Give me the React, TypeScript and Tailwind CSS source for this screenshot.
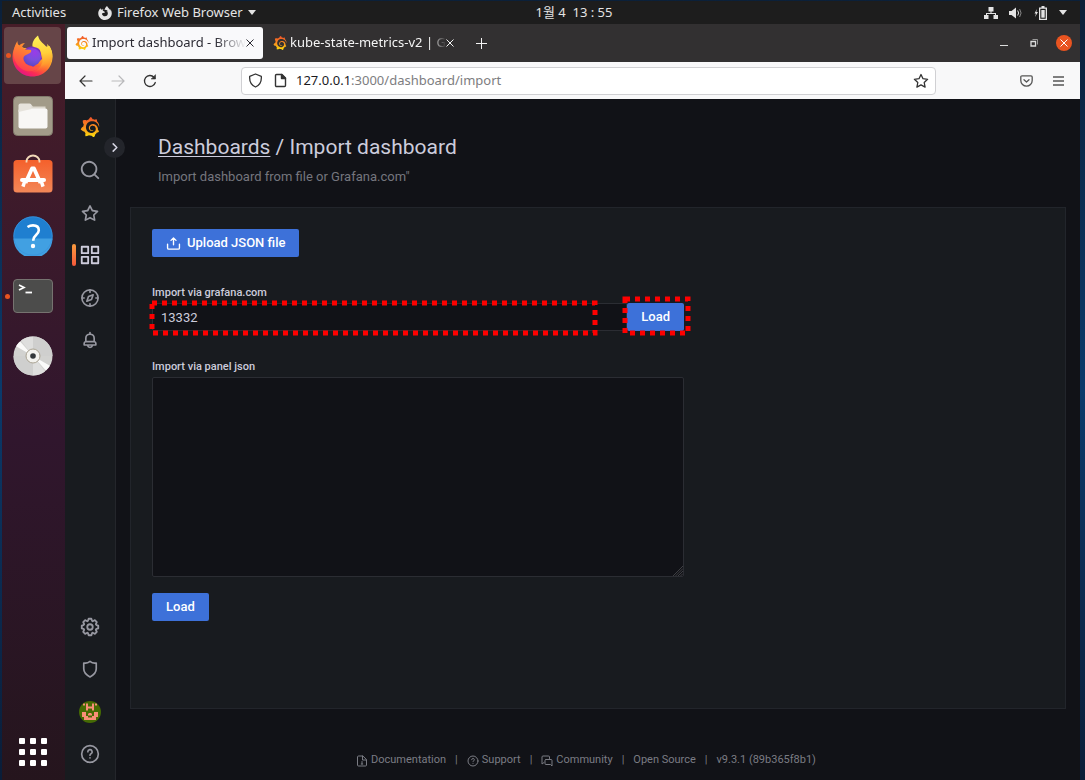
import React from "react";
import { SiFirefoxbrowser, SiGrafana } from "react-icons/si";

type GlyphProps = { d: string; className?: string };

const Glyph = ({ d, className = "size-5" }: GlyphProps) => (
  <svg viewBox="0 0 24 24" fill="currentColor" className={className} aria-hidden="true">
    <path d={d} />
  </svg>
);

const paths = {
  search:
    "M21.71,20.29,18,16.61A9,9,0,1,0,16.61,18l3.68,3.68a1,1,0,0,0,1.42,0A1,1,0,0,0,21.71,20.29ZM11,18a7,7,0,1,1,7-7A7,7,0,0,1,11,18Z",
  star: "M22,9.67A1,1,0,0,0,21.14,9l-5.69-.83L12.9,3a1,1,0,0,0-1.8,0L8.55,8.16,2.86,9a1,1,0,0,0-.81.68,1,1,0,0,0,.25,1l4.13,4-1,5.68A1,1,0,0,0,6.9,21.44L12,18.77l5.1,2.67a.93.93,0,0,0,.46.12,1,1,0,0,0,.59-.19,1,1,0,0,0,.4-1l-1-5.68,4.13-4A1,1,0,0,0,22,9.67Zm-6.15,4a1,1,0,0,0-.29.88l.72,4.2-3.76-2a1.06,1.06,0,0,0-.94,0l-3.76,2,.72-4.2a1,1,0,0,0-.29-.88l-3-3,4.21-.61a1,1,0,0,0,.76-.55L12,5.7l1.88,3.82a1,1,0,0,0,.76.55l4.21.61Z",
  apps: "M10,13H3a1,1,0,0,0-1,1v7a1,1,0,0,0,1,1h7a1,1,0,0,0,1-1V14A1,1,0,0,0,10,13ZM9,20H4V15H9ZM21,2H14a1,1,0,0,0-1,1v7a1,1,0,0,0,1,1h7a1,1,0,0,0,1-1V3A1,1,0,0,0,21,2ZM20,9H15V4h5Zm1,4H14a1,1,0,0,0-1,1v7a1,1,0,0,0,1,1h7a1,1,0,0,0,1-1V14A1,1,0,0,0,21,13Zm-1,7H15V15h5ZM10,2H3A1,1,0,0,0,2,3v7a1,1,0,0,0,1,1h7a1,1,0,0,0,1-1V3A1,1,0,0,0,10,2ZM9,9H4V4H9Z",
  bell: "M18,13.18V10a6,6,0,0,0-5-5.91V3a1,1,0,0,0-2,0V4.09A6,6,0,0,0,6,10v3.18A3,3,0,0,0,4,16v2a1,1,0,0,0,1,1H8.14a4,4,0,0,0,7.72,0H19a1,1,0,0,0,1-1V16A3,3,0,0,0,18,13.18ZM8,10a4,4,0,0,1,8,0v3H8Zm4,10a2,2,0,0,1-1.72-1h3.44A2,2,0,0,1,12,20Zm6-3H6V16a1,1,0,0,1,1-1H17a1,1,0,0,1,1,1Z",
  cog: "M21.32,9.55l-1.89-.63.89-1.78A1,1,0,0,0,20.13,6L18,3.87a1,1,0,0,0-1.15-.19l-1.78.89-.63-1.89A1,1,0,0,0,13.5,2h-3a1,1,0,0,0-.95.68L8.92,4.57,7.14,3.68A1,1,0,0,0,6,3.87L3.87,6a1,1,0,0,0-.19,1.15l.89,1.78-1.89.63A1,1,0,0,0,2,10.5v3a1,1,0,0,0,.68.95l1.89.63-.89,1.78A1,1,0,0,0,3.87,18L6,20.13a1,1,0,0,0,1.15.19l1.78-.89.63,1.89a1,1,0,0,0,.95.68h3a1,1,0,0,0,.95-.68l.63-1.89,1.78.89A1,1,0,0,0,18,20.13L20.13,18a1,1,0,0,0,.19-1.15l-.89-1.78,1.89-.63A1,1,0,0,0,22,13.5v-3A1,1,0,0,0,21.32,9.55ZM20,12.78l-1.2.4A2,2,0,0,0,17.64,16l.57,1.14-1.1,1.1L16,17.64a2,2,0,0,0-2.79,1.16l-.4,1.2H11.22l-.4-1.2A2,2,0,0,0,8,17.64l-1.14.57-1.1-1.1L6.36,16A2,2,0,0,0,5.2,13.18L4,12.78V11.22l1.2-.4A2,2,0,0,0,6.36,8L5.79,6.89l1.1-1.1L8,6.36A2,2,0,0,0,10.82,5.2l.4-1.2h1.56l.4,1.2A2,2,0,0,0,16,6.36l1.14-.57,1.1,1.1L17.64,8a2,2,0,0,0,1.16,2.79l1.2.4ZM12,8a4,4,0,1,0,4,4A4,4,0,0,0,12,8Zm0,6a2,2,0,1,1,2-2A2,2,0,0,1,12,14Z",
};

const line = {
  viewBox: "0 0 24 24",
  fill: "none",
  stroke: "currentColor",
  strokeWidth: 2,
  strokeLinecap: "round",
  strokeLinejoin: "round",
  "aria-hidden": true,
} as const;

const CompassIcon = () => (
  <svg {...line} className="size-5">
    <circle cx="12" cy="12" r="9.7" />
    <path d="M12 2.5v2.5M12 19v2.5M2.5 12H5M19 12h2.5" />
    <path d="M15.8 8.2l-2 5.6-5.6 2 2-5.6z" />
  </svg>
);

const ShieldIcon = () => (
  <svg {...line} className="size-5">
    <path d="M4.5 4.8c2.600.5 5.200-.1 7.500-1.900 2.300 1.800 4.900 2.400 7.500 1.900v7c0 4-2.700 7.300-7.500 9.700-4.800-2.400-7.500-5.700-7.500-9.700z" />
  </svg>
);

const HelpIcon = ({ className = "size-5" }: { className?: string }) => (
  <svg {...line} className={className}>
    <circle cx="12" cy="12" r="10" />
    <path d="M9.400 9.400a2.600 2.600 0 1 1 3.800 2.300c-.8.4-1.200.8-1.200 1.700M12 16.700v.1" />
  </svg>
);

const GrafanaGradient = () => (
  <svg className="absolute size-0" aria-hidden="true">
    <defs>
      <linearGradient id="grafana" x1="0" y1="1" x2="0" y2="0">
        <stop offset="0" stopColor="#fcdf0b" />
        <stop offset="0.4" stopColor="#f99b1c" />
        <stop offset="1" stopColor="#f0502a" />
      </linearGradient>
    </defs>
  </svg>
);

const FirefoxLogo = () => (
  <svg viewBox="0 0 42 42" className="size-[42px]" aria-hidden="true">
    <defs>
      <linearGradient id="ff-body" x1="0.85" y1="0.1" x2="0.25" y2="0.95">
        <stop offset="0" stopColor="#ffe04a" />
        <stop offset="0.3" stopColor="#ffb62b" />
        <stop offset="0.55" stopColor="#ff6a2f" />
        <stop offset="0.8" stopColor="#fb2c54" />
        <stop offset="1" stopColor="#e31587" />
      </linearGradient>
      <linearGradient id="ff-flame" x1="0.4" y1="0" x2="0.5" y2="1">
        <stop offset="0" stopColor="#fff25a" />
        <stop offset="0.5" stopColor="#ffd03a" />
        <stop offset="0.8" stopColor="#ff9a2e" />
        <stop offset="1" stopColor="#ff5a3c" stopOpacity="0" />
      </linearGradient>
      <linearGradient id="ff-face" x1="0.7" y1="0" x2="0.3" y2="1">
        <stop offset="0" stopColor="#ffa52c" />
        <stop offset="0.5" stopColor="#ff7238" />
        <stop offset="1" stopColor="#ff3a50" />
      </linearGradient>
      <radialGradient id="ff-globe" cx="0.65" cy="0.25" r="0.85">
        <stop offset="0" stopColor="#9a3be8" />
        <stop offset="0.5" stopColor="#7a4fdc" />
        <stop offset="1" stopColor="#5646c0" />
      </radialGradient>
    </defs>
    <path
      d="M4.500 9C2 13 .500 17 .500 21.500.500 33 9.500 41.500 20.500 41.500S40.500 33 40.500 21.500C40.500 18 39.500 14 37.500 11L28 13 12 13z"
      fill="url(#ff-body)"
    />
    <path d="M11 17c1-3 5-5.500 9.500-5.500 3 0 5.500.7 7.500 2.500l2 10-9 8-9-8z" fill="#7a2ec4" />
    <circle cx="20" cy="22" r="9" fill="url(#ff-globe)" />
    <path
      d="M26 .500c-4 3-6 7-5.500 11 3 1 7 1 8.500 5.500 4 6 1.500 14-4 17.500-2 1.500-4 2-6 2 9 2 21-3 21.300-15 .1-6-2.300-10-5.300-12.500l1 4.500C32.500 9 27.500 7 26 .500z"
      fill="url(#ff-flame)"
    />
    <path
      d="M5.500 6C3.500 8.500 2 13 1.500 18c0 8 5 16 13 18 6 1 11-1 14-5-6 2-13 1-16.500-4-1.300-2.500-1-5 1-6.500l5-2.500c1.200-.8 1.500-2 1-3l-5.500-.5-3.500-2c.5-2 1.700-3.500 3.200-4.500-2.700 0-4.700 1-6 2.700C6 9.500 5.300 8 5.500 6z"
      fill="url(#ff-face)"
    />
  </svg>
);

const FilesLogo = () => (
  <svg viewBox="0 0 40 40" className="size-10" aria-hidden="true">
    <rect x="0.5" y="0.5" width="39" height="39" rx="4" fill="#a29b89" stroke="#817b6c" />
    <path d="M6 8.500h12l2 2h12.500v8H6z" fill="#ddd9cf" />
    <rect x="5.5" y="12.5" width="29" height="20" rx="2" fill="#f8f7f5" />
    <path d="M5.500 16V9.500a2 2 0 0 1 2-2h9a2 2 0 0 1 2 2V13z" fill="#e6e3dc" />
  </svg>
);

const SoftwareLogo = () => (
  <svg viewBox="0 0 40 40" className="size-10 overflow-visible" aria-hidden="true">
    <defs>
      <linearGradient id="bag" x1="0" y1="0" x2="0" y2="1">
        <stop offset="0" stopColor="#f4602b" />
        <stop offset="1" stopColor="#f38758" />
      </linearGradient>
    </defs>
    <rect x="0.5" y="4" width="39" height="32.5" rx="3.5" fill="url(#bag)" />
    <path d="M13.500 6.500V5.500a6.500 6 0 0 1 13 0v1" fill="none" stroke="#f2d9b8" strokeWidth="1.8" />
    <g fill="none" stroke="#fff" strokeLinejoin="round">
      <path d="M12.500 27l6.500-14.500h2L27.500 27" strokeWidth="3.8" />
      <path d="M9 24h22" strokeWidth="4" strokeLinecap="round" />
      <path d="M10.500 29l1-3M29.500 29l-1-3" strokeWidth="3.5" strokeLinecap="square" />
    </g>
  </svg>
);

const QuestionLogo = () => (
  <svg viewBox="0 0 40 40" className="size-10" aria-hidden="true">
    <circle cx="20" cy="20" r="19.5" fill="#1f7fd0" />
    <path d="M.5 22.500h39a19.500 19.500 0 0 1-39 0z" fill="#41a0e2" />
    <circle cx="20" cy="20" r="19.2" fill="none" stroke="#3a93dc" strokeWidth="0.8" />
    <path
      d="M14.500 11c2-1.200 3.600-1.600 5.500-1.600 3.600 0 5.800 1.800 5.800 4.800 0 4.600-5.500 5-5.500 9.800v.8"
      fill="none"
      stroke="#fff"
      strokeWidth="2.6"
    />
    <circle cx="20" cy="30" r="2.2" fill="#fff" />
  </svg>
);

const TerminalLogo = () => (
  <svg viewBox="0 0 40 34" className="h-[34px] w-10" aria-hidden="true">
    <rect x="0.5" y="0.5" width="39" height="33" rx="3.5" fill="#4c4c4b" stroke="#767370" />
    <path d="M6 6l5 2.500L6 11" fill="none" stroke="#fff" strokeWidth="1.7" />
    <path d="M12.500 13.500H19" stroke="#fff" strokeWidth="1.8" />
  </svg>
);

const DiscLogo = () => (
  <svg viewBox="0 0 40 40" className="size-10" aria-hidden="true">
    <circle cx="20" cy="20" r="19.5" fill="#d2d2d0" />
    <path d="M20 20L8 4.500A19.500 19.500 0 0 1 20 .5zM20 20l12 15.500A19.500 19.500 0 0 1 20 39.500z" fill="#dededd" />
    <path d="M20 20V.5A19.500 19.500 0 0 1 39.500 20zM20 20v19.500A19.500 19.500 0 0 1 .5 20z" fill="#cfcfce" />
    <path d="M20 20L3.100 10.300a19.500 19.500 0 0 1 4-4.800zM20 20l16.900 9.700a19.500 19.500 0 0 1-4 4.800z" fill="#fafaf9" />
    <circle cx="20" cy="20" r="7" fill="#f3f2ee" stroke="#aaa393" />
    <circle cx="20" cy="20" r="2.8" fill="#33373a" />
  </svg>
);

const Avatar = () => (
  <svg viewBox="0 0 22 22" className="size-[22px] rounded-full" aria-hidden="true">
    <rect width="22" height="22" fill="#456a04" />
    <g fill="#f88f78">
      <path d="M4 2.500h2v2H4zM16 2.500h2v2h-2zM7 2.500h2v3h4v-3h2v7h-2V7.500H9v2H7z" />
      <path d="M3 11h4v4h2v4H5v-3H3zM19 11h-4v4h-2v4h4v-3h2zM9 13l1-1h2l1 1v1.500H9zM9 16.500h4v2.500H9z" />
    </g>
  </svg>
);

const Outline = () => (
  <svg className="pointer-events-none h-full w-full overflow-visible" aria-hidden="true">
    <rect width="100%" height="100%" fill="none" stroke="#fe0000" strokeWidth="5" strokeDasharray="5 5" />
  </svg>
);

const Caret = () => (
  <svg viewBox="0 0 8 5" className="h-[5px] w-2" aria-hidden="true">
    <path d="M0 0h8L4 5z" fill="currentColor" />
  </svg>
);

const CloseX = () => (
  <svg viewBox="0 0 8 8" className="size-2" stroke="currentColor" fill="none" aria-hidden="true">
    <path d="M.5.5l7 7M7.500.5l-7 7" />
  </svg>
);

const TopBar = () => (
  <header className="flex h-[23px] shrink-0 items-center bg-[#1d1d1d] text-[13px] text-[#e4e4e4]">
    <button type="button" className="w-[66px] pl-2.5 text-left">
      Activities
    </button>
    <div className="grid flex-1 grid-cols-[1fr_auto_1fr] items-center">
      <button type="button" className="flex items-center gap-[5px] pl-[30px]">
        <SiFirefoxbrowser className="size-3.5" />
        <span className="whitespace-nowrap">Firefox Web Browser</span>
        <Caret />
      </button>
      <time className="whitespace-pre">1월 4  13 : 55</time>
      <div className="flex items-center justify-end gap-[11px] pr-[13px]">
        <svg viewBox="0 0 14 12" className="h-3 w-3.5" fill="currentColor" aria-hidden="true">
          <path d="M4.500 0h5v4.500h-5zM0 8h4.500v4H0zM9.500 8H14v4H9.500zM6.500 4.500h1V6h4.500v2h-1V7h-8v1H2V6h4.500z" />
        </svg>
        <svg viewBox="0 0 14 12" className="h-3 w-3.5" fill="currentColor" aria-hidden="true">
          <path d="M0 4h2.500L7 .5v11L2.500 8H0z" />
          <path d="M8.700 3.500q1.800 2.500 0 5" fill="none" stroke="currentColor" />
          <path d="M10.600 2q3 4 0 8" fill="none" stroke="#858585" />
        </svg>
        <svg viewBox="0 0 14 14" className="size-3.5" fill="currentColor" aria-hidden="true">
          <path d="M3 3L.5 7.500H2L1 11l3-5H2.300z" />
          <path d="M7.500 0h3v1.500H13V14H5V1.500h2.500zM6.300 2.800v10h5.400v-10z" fillRule="evenodd" />
          <path d="M7.300 4h3.400v7.700H7.300z" />
        </svg>
        <Caret />
      </div>
    </div>
  </header>
);

const Dock = () => (
  <aside className="flex w-[63px] shrink-0 flex-col items-center bg-linear-to-b from-[#471d28] via-[#30162d] via-55% to-[#25151d] pt-[3px] pr-0.5 pb-3.5">
    <button type="button" aria-label="Firefox" className="relative flex h-[57px] w-[57px] items-center justify-center rounded bg-[#664548]">
      <FirefoxLogo />
      <span className="absolute top-[26px] left-0.5 size-[5px] rounded-full bg-[#e95420]" />
    </button>
    <div className="mt-3 flex flex-col items-center gap-5">
      <button type="button" aria-label="Files"><FilesLogo /></button>
      <button type="button" aria-label="Software"><SoftwareLogo /></button>
      <button type="button" aria-label="Help"><QuestionLogo /></button>
      <button type="button" aria-label="Terminal" className="relative flex h-10 items-center">
        <TerminalLogo />
        <span className="absolute top-[18px] -left-2 size-[5px] rounded-full bg-[#e95420]" />
      </button>
      <button type="button" aria-label="Disc"><DiscLogo /></button>
    </div>
    <button type="button" aria-label="Show applications" className="mt-auto grid grid-cols-3 gap-[5px]">
      {Array.from({ length: 9 }, (_, i) => (
        <span key={i} className="size-1.5 rounded-[1px] bg-white" />
      ))}
    </button>
  </aside>
);

const TabStrip = () => (
  <div className="flex h-[38px] shrink-0 items-center bg-[#323031] pl-0.5 text-[13px] text-[#f4f4f4]">
    <div className="flex h-8 w-[196px] items-center rounded-[3px] bg-[#f9f9fb] pr-2.5 pl-2 text-[#2b2a33]">
      <SiGrafana className="size-3.5 shrink-0 fill-[url(#grafana)]" />
      <span className="ml-[3px] mask-r-from-80% whitespace-nowrap">Import dashboard - Brow</span>
      <button type="button" aria-label="Close tab" className="ml-auto"><CloseX /></button>
    </div>
    <div className="ml-2.5 flex w-[179px] items-center">
      <SiGrafana className="size-3.5 shrink-0 fill-[url(#grafana)]" />
      <span className="ml-[3px] mask-r-from-90% whitespace-nowrap">kube-state-metrics-v2 | G</span>
      <button type="button" aria-label="Close tab" className="ml-auto"><CloseX /></button>
    </div>
    <button type="button" aria-label="New tab" className="ml-6">
      <svg viewBox="0 0 11 11" className="size-[11px]" stroke="currentColor" aria-hidden="true">
        <path d="M5.500 0v11M0 5.500h11" />
      </svg>
    </button>
    <div className="ml-auto flex items-center pr-2">
      <button type="button" aria-label="Minimise" className="flex w-[30px] justify-center pt-1">
        <span className="h-px w-2 bg-[#dddddd]" />
      </button>
      <button type="button" aria-label="Restore" className="flex w-[30px] justify-center">
        <svg viewBox="0 0 8 8" className="size-2" fill="none" stroke="#dddddd" aria-hidden="true">
          <path d="M1 2.500h4.500V7H1z" strokeWidth="1.300" />
          <path d="M2.500.5h5v5" stroke="#9a9a9a" />
        </svg>
      </button>
      <button type="button" aria-label="Close window" className="ml-[7px] flex size-4 items-center justify-center rounded-full bg-[#e95420] text-white">
        <CloseX />
      </button>
    </div>
  </div>
);

const NavBar = () => (
  <div className="flex h-[37px] shrink-0 items-center bg-[#f8f8f9] text-[#333333]">
    <div className="flex w-[176px] items-center gap-[18px] pl-3.5">
      <button type="button" aria-label="Back">
        <svg viewBox="0 0 14 14" className="size-3.5" fill="none" stroke="currentColor" strokeWidth="1.2" strokeLinecap="round" aria-hidden="true">
          <path d="M13 7H1M6 2L1 7l5 5" />
        </svg>
      </button>
      <button type="button" aria-label="Forward" className="text-[#b9b9bb]">
        <svg viewBox="0 0 14 14" className="size-3.5" fill="none" stroke="currentColor" strokeWidth="1.2" strokeLinecap="round" aria-hidden="true">
          <path d="M1 7h12M8 2l5 5-5 5" />
        </svg>
      </button>
      <button type="button" aria-label="Reload">
        <svg viewBox="0 0 14 14" className="size-3.5" fill="none" stroke="currentColor" strokeWidth="1.3" strokeLinecap="round" aria-hidden="true">
          <path d="M12.300 8.500A5.500 5.500 0 1 1 11 3.200" />
          <path d="M12.500 1v4h-4z" fill="currentColor" strokeWidth="0.6" />
        </svg>
      </button>
    </div>
    <div className="flex h-7 flex-1 items-center rounded border border-[#d0d0d3] bg-white px-1.5">
      <svg viewBox="0 0 15 15" className="size-[15px]" fill="none" stroke="currentColor" strokeWidth="1.3" strokeLinejoin="round" aria-hidden="true">
        <path d="M7.500 1l5.800 2.300c.4 4.700-1.600 8.900-5.800 10.700C3.300 12.200 1.300 8 1.700 3.300z" />
      </svg>
      <svg viewBox="0 0 15 15" className="ml-2.5 size-[15px]" fill="none" stroke="currentColor" strokeWidth="1.4" strokeLinejoin="round" aria-hidden="true">
        <path d="M3.500 1.500H9l3.500 3.500v7.500a1 1 0 0 1-1 1h-8a1 1 0 0 1-1-1v-10a1 1 0 0 1 1-1z" />
        <path d="M8.500 1.500v4h4z" fill="currentColor" />
      </svg>
      <a href="#address" className="ml-2 flex-1 text-[13px] text-[#7d7d80]">
        <span className="text-[#1b1b1f]">127.0.0.1</span>:3000/dashboard/import
      </a>
      <button type="button" aria-label="Bookmark this page">
        <svg viewBox="0 0 16 16" className="size-4" fill="none" stroke="currentColor" strokeWidth="1.3" strokeLinejoin="round" aria-hidden="true">
          <path d="M8 1.500l2 4.200 4.600.6-3.400 3.200.9 4.600L8 11.900l-4.100 2.200.9-4.600L1.400 6.300 6 5.700z" />
        </svg>
      </button>
    </div>
    <div className="flex w-36 items-center justify-end gap-5 pr-4 text-[#555555]">
      <button type="button" aria-label="Save to Pocket">
        <svg viewBox="0 0 13 12" className="h-3 w-[13px]" fill="none" stroke="currentColor" strokeWidth="1.3" strokeLinecap="round" strokeLinejoin="round" aria-hidden="true">
          <path d="M2 .8h9a1.200 1.200 0 0 1 1.200 1.200v3.500a5.700 5.700 0 0 1-11.400 0V2A1.200 1.200 0 0 1 2 .8z" />
          <path d="M4 4.700L6.500 7 9 4.700" />
        </svg>
      </button>
      <button type="button" aria-label="Open menu">
        <svg viewBox="0 0 11 10" className="h-2.5 w-[11px]" stroke="currentColor" strokeWidth="1.4" aria-hidden="true">
          <path d="M0 1h11M0 5h11M0 9h11" />
        </svg>
      </button>
    </div>
  </div>
);

const SideNav = () => (
  <nav className="relative flex w-[51px] shrink-0 flex-col items-center justify-between border-r border-[#24262b] bg-[#181b1f] pt-[18px] pb-4 text-[#9798a1]">
    <div className="flex h-[233px] flex-col items-center justify-between">
      <a href="#home" aria-label="Home"><SiGrafana className="size-5 fill-[url(#grafana)]" /></a>
      <a href="#search" aria-label="Search"><Glyph d={paths.search} className="size-[22px]" /></a>
      <a href="#starred" aria-label="Starred"><Glyph d={paths.star} /></a>
      <a href="#dashboards" aria-label="Dashboards" className="relative text-[#ccccdc]">
        <Glyph d={paths.apps} className="size-[22px]" />
        <span className="absolute top-0 -left-[7px] h-[22px] w-1 rounded-[2px] bg-linear-to-b from-[#f79a3e] to-[#f4573a]" />
      </a>
      <a href="#explore" aria-label="Explore"><CompassIcon /></a>
      <a href="#alerting" aria-label="Alerting"><Glyph d={paths.bell} /></a>
    </div>
    <div className="flex h-[148px] flex-col items-center justify-between">
      <a href="#configuration" aria-label="Configuration"><Glyph d={paths.cog} className="size-[22px]" /></a>
      <a href="#admin" aria-label="Server admin"><ShieldIcon /></a>
      <a href="#profile" aria-label="Profile"><Avatar /></a>
      <a href="#help" aria-label="Help"><HelpIcon /></a>
    </div>
    <button type="button" aria-label="Expand menu" className="absolute top-[38px] -right-2.5 flex size-[21px] items-center justify-center rounded-full bg-[#23252b] text-[#d5d5e2]">
      <svg viewBox="0 0 6 10" className="h-[9px] w-1.5" fill="none" stroke="currentColor" strokeWidth="1.7" strokeLinecap="round" strokeLinejoin="round" aria-hidden="true">
        <path d="M1 1l4 4-4 4" />
      </svg>
    </button>
  </nav>
);

const primary = "flex h-7 items-center rounded-[2px] bg-[#3d71d9] px-3.5 text-[13px] font-medium text-white";

const ImportPage = () => (
  <main className="flex min-w-0 flex-1 flex-col bg-[#111217] px-3.5 font-[Roboto,sans-serif] text-[#ccccdc]">
    <div className="px-7 pt-8 pb-5">
      <h1 className="text-[21px] leading-8">
        <a href="#dashboards" className="underline decoration-1 underline-offset-2">Dashboards</a> / Import dashboard
      </h1>
      <p className="mt-1 text-[13px] leading-5 text-[#75767e]">Import dashboard from file or Grafana.com"</p>
    </div>
    <section className="flex-1 border border-[#22252b] bg-[#181b1f] px-[21px] pt-[21px]">
      <button type="button" className={primary}>
        <svg {...line} strokeWidth={2.2} className="mr-1.5 size-[15px]">
          <path d="M8 7l4-4 4 4M12 3v11M2.500 13v6a2 2 0 0 0 2 2h15a2 2 0 0 0 2-2v-6" />
        </svg>
        Upload JSON file
      </button>
      <form className="mt-7 max-w-[532px]" onSubmit={(e) => e.preventDefault()}>
        <label htmlFor="gcom" className="block text-[11px] leading-4 font-medium">Import via grafana.com</label>
        <div className="relative mt-0.5 flex">
          <input
            id="gcom"
            defaultValue="13332"
            className="h-7 min-w-0 flex-1 rounded-l-[2px] border border-[#2b2d33] bg-[#111217] px-2 text-[13px] outline-none"
          />
          <button type="submit" className={primary}>Load</button>
          <div className="absolute top-0 right-[89px] -bottom-0.5 left-0">
            <Outline />
          </div>
          <div className="absolute -top-1 -right-1 -bottom-0.5 w-[63px]">
            <Outline />
          </div>
        </div>
      </form>
      <form className="mt-7 max-w-[532px]" onSubmit={(e) => e.preventDefault()}>
        <label htmlFor="json" className="block text-[11px] leading-4 font-medium">Import via panel json</label>
        <div className="relative mt-0.5">
          <textarea
            id="json"
            className="block h-[200px] w-full resize-none rounded-[2px] border border-[#2b2d33] bg-[#111217] p-2 text-[13px] outline-none"
          />
          <svg viewBox="0 0 10 10" className="pointer-events-none absolute right-px bottom-px size-2.5" stroke="#3e3f43" aria-hidden="true">
            <path d="M0 10L10 0M2.500 10L10 2.500M5 10l5-5M7.500 10L10 7.500" />
          </svg>
        </div>
        <button type="submit" className={`${primary} mt-4`}>Load</button>
      </form>
    </section>
    <footer className="flex h-[71px] shrink-0 items-center justify-center pt-8 pr-6 text-[11px] text-[#7b7c84]">
      <a href="#docs" className="flex items-center gap-[3px]">
        <svg {...line} className="size-3">
          <path d="M13 2H5a2 2 0 0 0-2 2v16a2 2 0 0 0 2 2h14a2 2 0 0 0 2-2V10zM13 2v8h8M12 13v5M10.500 18h3" />
        </svg>
        Documentation
      </a>
      <span className="mx-[9px]">|</span>
      <a href="#support" className="flex items-center gap-[3px]"><HelpIcon className="size-3" />Support</a>
      <span className="mx-[9px]">|</span>
      <a href="#community" className="flex items-center gap-[3px]">
        <svg {...line} className="size-3">
          <path d="M6 15l-4 3V4a2 2 0 0 1 2-2h11a2 2 0 0 1 2 2v3M10 9h10a2 2 0 0 1 2 2v11l-3-3h-9a2 2 0 0 1-2-2v-6a2 2 0 0 1 2-2z" />
        </svg>
        Community
      </a>
      <span className="mx-[9px]">|</span>
      <a href="#source">Open Source</a>
      <span className="mx-[9px]">|</span>
      <span>v9.3.1 (89b365f8b1)</span>
    </footer>
  </main>
);

export default function App() {
  return (
    <div className="flex min-h-screen flex-col bg-linear-to-b from-[#0b2039] via-[#0a3a6b] to-[#0a1d38] pt-px pr-[5px] pl-0.5 font-['Noto_Sans','Noto_Sans_CJK_KR',sans-serif]">
      <GrafanaGradient />
      <TopBar />
      <div className="flex flex-1">
        <Dock />
        <div className="flex min-w-0 flex-1 flex-col">
          <TabStrip />
          <NavBar />
          <div className="flex flex-1">
            <SideNav />
            <ImportPage />
          </div>
        </div>
      </div>
    </div>
  );
}
